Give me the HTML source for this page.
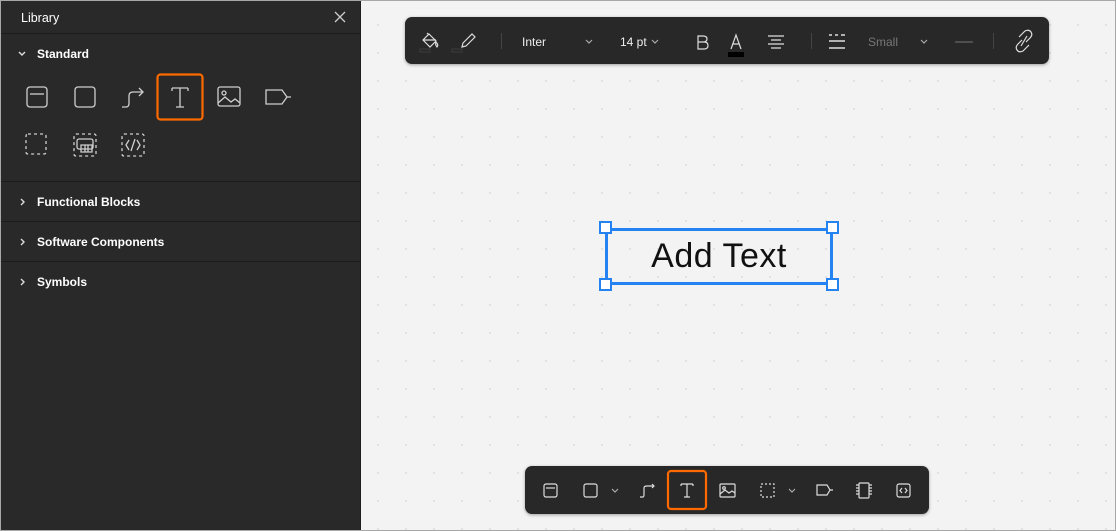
<!DOCTYPE html>
<html><head><style>
*{margin:0;padding:0;box-sizing:border-box}
body{width:1116px;height:531px;overflow:hidden;font-family:"Liberation Sans",Arial,sans-serif;background:#f3f3f3;position:relative}
.frame{position:absolute;inset:0;border:1px solid #a8a8a8;pointer-events:none;z-index:10}
.canvas{position:absolute;left:361px;top:0;right:0;bottom:0;background-color:#f3f3f3;background-image:radial-gradient(circle,#cdcdcd 0.6px,transparent 0.9px);background-size:28px 28px;background-position:3px 11px}
.panel{position:absolute;left:0;top:0;width:361px;height:531px;background:#292929;color:#fff;border-right:1px solid #1e1e1e}
.hdr{height:34px;border-bottom:1px solid #1c1c1c;font-size:12.5px;padding:11px 21px}
.sec{position:absolute;left:0;width:360px;font-weight:bold;font-size:12px;padding-left:37px}
.line{position:absolute;left:0;width:360px;height:1px;background:#1c1c1c}
svg{position:absolute;overflow:visible}
.tb{position:absolute;background:#282828;border-radius:7px;box-shadow:0 1px 3px rgba(0,0,0,.35)}
.t{position:absolute;color:#eee;font-size:12px}
.sep{position:absolute;width:1px;height:16px;background:#444;top:16px}
</style></head><body>
<div class="canvas"></div>
<div class="panel">
<div class="hdr">Library</div>
<svg style="left:334px;top:11px" width="12" height="12" stroke="#ccc" stroke-width="1.3"><path d="M1 1L11 11M11 1L1 11"/></svg>
<svg style="left:18px;top:51px" width="8" height="6" stroke="#ddd" stroke-width="1.4" fill="none"><path d="M1 1L4 4L7 1"/></svg>
<div class="sec" style="top:47px">Standard</div>
<svg style="left:0;top:0" width="360" height="180" fill="none" stroke="#cfcfcf" stroke-width="1.3">
<rect x="27" y="87" width="20" height="20" rx="3"/><path d="M30 94H44"/>
<rect x="75" y="87" width="20" height="20" rx="3"/>
<path d="M122 107H126Q129 107 129 103V96Q129 92 133 92H143M139 88L143 92L139 96"/>
<rect x="157.5" y="74.5" width="45" height="45" rx="3" stroke="#ff6a00" stroke-width="2.2"/>
<path d="M172 88H188M180 88V107M176 107H184M172 88V91M188 88V91"/>
<rect x="218" y="87" width="22" height="19" rx="2"/><circle cx="224" cy="93" r="2"/><path d="M218 103L225 97L231 102L235 99L240 103"/>
<path d="M266 90H282L287 97L282 104H266Z M287 97H291"/>
<g stroke-dasharray="3 3"><rect x="26" y="134" width="20" height="20" rx="2"/><rect x="74" y="134" width="22" height="22" rx="2"/><rect x="122" y="134" width="22" height="22" rx="2"/></g>
<rect x="77" y="139" width="16" height="10" rx="2"/><path d="M81 145H92V152H81ZM85 145V152M88 145V152"/>
<path d="M129 140L126 145L129 150M137 140L140 145L137 150M135 139L131 151"/>
</svg>
<div class="line" style="top:181px"></div>
<div class="sec" style="top:195px">Functional Blocks</div>
<div class="line" style="top:221px"></div>
<div class="sec" style="top:235px">Software Components</div>
<div class="line" style="top:261px"></div>
<div class="sec" style="top:275px">Symbols</div>
<svg style="left:20px;top:198px" width="6" height="90" stroke="#ddd" stroke-width="1.4" fill="none"><path d="M1 1L4 4L1 7M1 41L4 44L1 47M1 81L4 84L1 87"/></svg>
</div>

<div class="tb" style="left:405px;top:17px;width:644px;height:47px">
<svg style="left:0;top:0" width="644" height="47" fill="none" stroke="#ddd" stroke-width="1.2">
<path d="M24 17L31 24L25 30L18 23Z M18 23H31 M22 16L24 18 M31 25Q34 28 32 30Q30 28 31 25" /><rect x="15" y="32" width="10" height="3" stroke="#3a3a3a"/>
<path d="M57 30L58 26L67 17L70 20L61 29Z"/><rect x="47" y="32" width="10" height="3" stroke="#3a3a3a"/>
<path d="M181 23L184 26L187 23M247 23L250 26L253 23M516 23L519 26L522 23" stroke="#aaa"/>
<path d="M293 19H298Q302 19 302 22Q302 25 298 25H293ZM293 25H299Q303 25 303 28.5Q303 32 299 32H293Z M293 19V32"/>
<path d="M326 32L331 18L336 32M328 27H334"/><rect x="323" y="35" width="16" height="5" fill="#000" stroke="none"/>
<path d="M363 19H379M366 23H376M363 27H379M366 31H376"/>
<path d="M424 18H427M430 18H433M436 18H440M424 24H440M424 31H440" stroke-width="1.5"/>
<path d="M550 25H568" stroke="#666"/>
<path d="M614 20L620 14Q624 12 626 15Q628 18 625 21L621 25 M624 28L618 34Q614 36 612 33Q610 30 613 27L617 23 M616 29L622 19"/>
</svg>
<div class="sep" style="left:96px"></div><div class="sep" style="left:406px"></div><div class="sep" style="left:588px"></div>
<div class="t" style="left:117px;top:18px">Inter</div>
<div class="t" style="left:215px;top:18px">14 pt</div>
<div class="t" style="left:463px;top:18px;color:#777">Small</div>
</div>

<div style="position:absolute;left:605px;top:228px;width:228px;height:57px;border:3px solid #2483f0"></div>
<div style="position:absolute;left:605px;top:237px;width:228px;text-align:center;font-size:34px;color:#111;letter-spacing:0.5px">Add Text</div>
<div style="position:absolute;left:599px;top:221px;width:13px;height:13px;background:#fff;border:2px solid #2483f0"></div>
<div style="position:absolute;left:826px;top:221px;width:13px;height:13px;background:#fff;border:2px solid #2483f0"></div>
<div style="position:absolute;left:599px;top:278px;width:13px;height:13px;background:#fff;border:2px solid #2483f0"></div>
<div style="position:absolute;left:826px;top:278px;width:13px;height:13px;background:#fff;border:2px solid #2483f0"></div>

<div class="tb" style="left:525px;top:466px;width:404px;height:48px">
<svg style="left:0;top:0" width="404" height="48" fill="none" stroke="#ddd" stroke-width="1.2">
<rect x="19" y="18" width="13" height="13" rx="2"/><path d="M21 22H30"/>
<rect x="59" y="18" width="13" height="13" rx="2"/>
<path d="M87 23L90 26L93 23M264 23L267 26L270 23" stroke="#aaa"/>
<path d="M115 31H118Q119 31 119 28V22Q119 20 122 20H129M127 18L129 20L127 22"/>
<rect x="143" y="5" width="38" height="38" rx="3" stroke="#ff6a00" stroke-width="2.2"/>
<path d="M156 18H168M162 18V31M159 31H165M156 18V20M168 18V20"/>
<rect x="195" y="18" width="15" height="13" rx="1"/><circle cx="199" cy="22" r="1.3"/><path d="M195 28L200 24L204 27L207 25L210 27"/>
<rect x="236" y="18" width="13" height="13" stroke-dasharray="2 2"/>
<path d="M292 19H302L305 24L302 29H292ZM305 24H308"/>
<rect x="334" y="17" width="10" height="15" rx="1"/><path d="M331 19H334M331 22H334M331 25H334M331 28H334M344 19H347M344 22H347M344 25H347M344 28H347"/>
<rect x="372" y="18" width="13" height="13" rx="2"/><path d="M377 22L375 24.5L377 27M380 22L382 24.5L380 27"/>
</svg>
</div>
<div class="frame"></div>
</body></html>
